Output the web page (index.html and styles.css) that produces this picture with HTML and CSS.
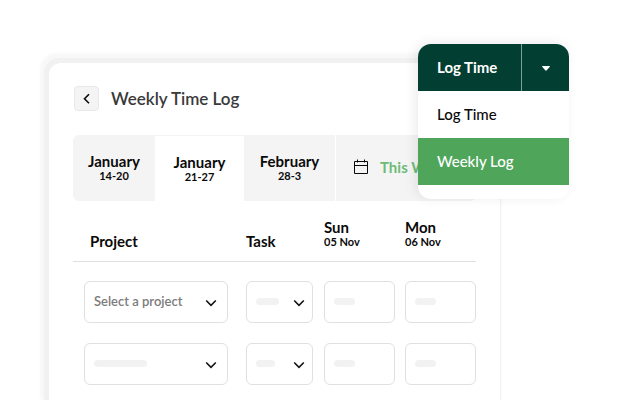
FILE: index.html
```html
<!DOCTYPE html>
<html lang="en">
<head>
    <meta charset="UTF-8">
    <meta name="viewport" content="width=device-width, initial-scale=1.0">
    <title>Weekly Time Log</title>
    <link rel="stylesheet" href="styles.css">
</head>
<body>
    <div class="page">
        <main class="card">
            <header class="card-header">
                <button type="button" class="back-btn" aria-label="Back">
                    <svg width="8" height="12" viewBox="0 0 8 12" fill="none" stroke="currentColor" stroke-width="1.6">
                        <path d="M6 1.200L1.500 5.700l4.500 4.500"></path>
                    </svg>
                </button>
                <h1 class="title">Weekly Time Log</h1>
            </header>

            <div class="weeks">
                <button type="button" class="week week-first">
                    <span class="week-month">January</span>
                    <span class="week-days">14-20</span>
                </button>
                <button type="button" class="week week-active">
                    <span class="week-month">January</span>
                    <span class="week-days">21-27</span>
                </button>
                <button type="button" class="week week-next">
                    <span class="week-month">February</span>
                    <span class="week-days">28-3</span>
                </button>
                <button type="button" class="this-week">
                    <svg width="16" height="16" viewBox="0 0 16 16" fill="none" stroke="currentColor">
                        <path d="M1.500 2.500h13v12h-13zM1.500 6.500h13M4.500 0.500v3M11.500 0.500v3"></path>
                    </svg>
                    This Week
                </button>
            </div>

            <table class="log">
                <thead>
                    <tr>
                        <th class="col-project">Project</th>
                        <th class="col-task">Task</th>
                        <th class="col-sun">Sun<span class="date">05 Nov</span></th>
                        <th class="col-mon">Mon<span class="date">06 Nov</span></th>
                    </tr>
                </thead>
                <tbody>
                    <tr>
                        <td class="col-project">
                            <div class="field">
                                <select class="control" aria-label="Project"><option>Select a project</option></select>
                                <svg class="chevron" width="12" height="8" viewBox="0 0 12 8" fill="none" stroke="currentColor" stroke-width="1.6"><path d="M1.200 1.500L6 6.300l4.800-4.800"></path></svg>
                            </div>
                        </td>
                        <td class="col-task">
                            <div class="field">
                                <select class="control" aria-label="Task"><option></option></select>
                                <span class="bar bar-task"></span>
                                <svg class="chevron" width="12" height="8" viewBox="0 0 12 8" fill="none" stroke="currentColor" stroke-width="1.6"><path d="M1.200 1.500L6 6.300l4.800-4.800"></path></svg>
                            </div>
                        </td>
                        <td class="col-sun">
                            <div class="field">
                                <input type="text" class="control" aria-label="Hours on Sunday">
                                <span class="bar"></span>
                            </div>
                        </td>
                        <td class="col-mon">
                            <div class="field">
                                <input type="text" class="control" aria-label="Hours on Monday">
                                <span class="bar"></span>
                            </div>
                        </td>
                    </tr>
                    <tr>
                        <td class="col-project">
                            <div class="field">
                                <select class="control" aria-label="Project"><option></option></select>
                                <span class="bar bar-long"></span>
                                <svg class="chevron" width="12" height="8" viewBox="0 0 12 8" fill="none" stroke="currentColor" stroke-width="1.6"><path d="M1.200 1.500L6 6.300l4.800-4.800"></path></svg>
                            </div>
                        </td>
                        <td class="col-task">
                            <div class="field">
                                <select class="control" aria-label="Task"><option></option></select>
                                <span class="bar bar-short"></span>
                                <svg class="chevron" width="12" height="8" viewBox="0 0 12 8" fill="none" stroke="currentColor" stroke-width="1.6"><path d="M1.200 1.500L6 6.300l4.800-4.800"></path></svg>
                            </div>
                        </td>
                        <td class="col-sun">
                            <div class="field">
                                <input type="text" class="control" aria-label="Hours on Sunday">
                                <span class="bar"></span>
                            </div>
                        </td>
                        <td class="col-mon">
                            <div class="field">
                                <input type="text" class="control" aria-label="Hours on Monday">
                                <span class="bar"></span>
                            </div>
                        </td>
                    </tr>
                </tbody>
            </table>
        </main>

        <div class="menu">
            <div class="menu-head">
                <button type="button" class="menu-main">Log Time</button>
                <button type="button" class="menu-toggle" aria-label="More options">
                    <svg width="8" height="5" viewBox="0 0 8 5" fill="currentColor">
                        <path d="M0.600 0h6.800c.5 0 .7.500.4.800L4.500 4.600a.7.7 0 0 1-1 0L.200.800C-.100.500.100 0 .600 0z"></path>
                    </svg>
                </button>
            </div>
            <button type="button" class="menu-item">Log Time</button>
            <button type="button" class="menu-item menu-item-active">Weekly Log</button>
        </div>
    </div>
</body>
</html>
```
FILE: styles.css
```css
:root {
    --dark: #023f32;
    --green: #4fa65b;
    --gray: #f4f4f4;
    --border: #e0e0e0;
    --text: #0a0a0a;
}

* {
    box-sizing: border-box;
    margin: 0;
    padding: 0;
}

body {
    font-family: Lato, sans-serif;
    background: #ffffff;
    color: var(--text);
}

button {
    border: none;
    background: none;
    font-family: inherit;
    color: inherit;
    cursor: pointer;
}

.page {
    position: relative;
    padding: 63px 118px 0 49px;
    overflow: hidden;
}

.card {
    padding: 23px 24px 15px;
    border-radius: 12px 12px 0 0;
    background: #ffffff;
    box-shadow: -2px -2px 0 3px #f1f1f1, -4px -5px 3px 5px #f8f8f8;
}

.card-header {
    display: flex;
    align-items: center;
    gap: 12px;
    padding-left: 1px;
}

.back-btn {
    display: flex;
    align-items: center;
    justify-content: center;
    width: 25px;
    height: 25px;
    border: 1px solid #e8e8e8;
    border-radius: 4px;
    background: var(--gray);
}

.title {
    font-size: 17px;
    line-height: 25px;
    font-weight: 600;
    color: #3a3a3a;
}

.weeks {
    display: flex;
    height: 66px;
    margin-top: 24px;
    border-radius: 6px;
    background: var(--gray);
    overflow: hidden;
}

.week {
    display: flex;
    flex-direction: column;
    align-items: center;
    justify-content: center;
    padding-bottom: 2px;
    font-weight: 700;
}

.week-first {
    width: 82px;
}

.week-active {
    width: 89px;
    border-top: 1px solid var(--gray);
    background: #ffffff;
}

.week-next {
    width: 92px;
    border-right: 1px solid #ffffff;
}

.week-month {
    font-size: 15px;
    line-height: 18px;
}

.week-days {
    font-size: 11px;
    line-height: 12px;
}

.this-week {
    display: flex;
    flex: 1;
    align-items: center;
    gap: 11px;
    padding-left: 17px;
    padding-bottom: 2px;
    font-size: 15px;
    font-weight: 700;
    color: #6dbb78;
    white-space: nowrap;
}

.this-week svg {
    color: var(--text);
}

.log {
    width: 100%;
    table-layout: fixed;
    border-collapse: collapse;
}

.log thead tr {
    border-bottom: 1px solid var(--border);
}

.log th {
    height: 60px;
    padding-bottom: 12px;
    font-size: 15px;
    line-height: 16px;
    font-weight: 700;
    text-align: left;
    vertical-align: bottom;
}

.log td {
    padding-bottom: 20px;
}

.log tbody tr:first-child td {
    padding-top: 19px;
}

.log tbody tr:last-child td {
    padding-bottom: 0;
}

.log th.col-project {
    padding-left: 17px;
}

.log td.col-project {
    padding-left: 11px;
    padding-right: 18px;
}

.col-task {
    width: 78px;
}

.col-sun {
    width: 81px;
}

.col-mon {
    width: 71px;
}

.log td.col-task {
    padding-right: 11px;
}

.log td.col-sun {
    padding-right: 10px;
}

.date {
    display: block;
    font-size: 11px;
    line-height: 14px;
}

.field {
    position: relative;
}

.control {
    display: block;
    width: 100%;
    height: 42px;
    padding: 0 9px 2px;
    border: 1px solid var(--border);
    border-radius: 6px;
    background: #ffffff;
    font-family: inherit;
    font-size: 13px;
    font-weight: 600;
    color: #7c7c7c;
    appearance: none;
}

.chevron {
    position: absolute;
    top: 18px;
    right: 11px;
    color: #111111;
    pointer-events: none;
}

.col-task .chevron {
    right: 8px;
}

.bar {
    position: absolute;
    top: 17px;
    left: 10px;
    width: 21px;
    height: 7px;
    border-radius: 4px;
    background: #f2f2f2;
    pointer-events: none;
}

.bar-task {
    width: 23px;
}

.bar-long {
    width: 53px;
}

.bar-short {
    width: 19px;
}

/* split button with its open menu */
.menu {
    position: absolute;
    top: 44px;
    right: 49px;
    width: 151px;
    padding-bottom: 14px;
    border-radius: 13px;
    background: #ffffff;
    box-shadow: -3px -1px 12px rgba(0, 0, 0, 0.08);
    overflow: hidden;
}

.menu-head {
    display: flex;
    height: 47px;
    background: var(--dark);
    color: #ffffff;
}

.menu-main {
    flex: 1;
    padding: 0 0 2px 19px;
    font-size: 15px;
    font-weight: 700;
    text-align: left;
}

.menu-toggle {
    display: flex;
    align-items: center;
    justify-content: center;
    width: 48px;
    padding-top: 2px;
    border-left: 1px solid #7f9f98;
}

.menu-item {
    display: block;
    width: 100%;
    height: 47px;
    padding: 0 0 2px 19px;
    font-size: 15px;
    font-weight: 500;
    text-align: left;
}

.menu-item-active {
    background: var(--green);
    color: #ffffff;
}
```
